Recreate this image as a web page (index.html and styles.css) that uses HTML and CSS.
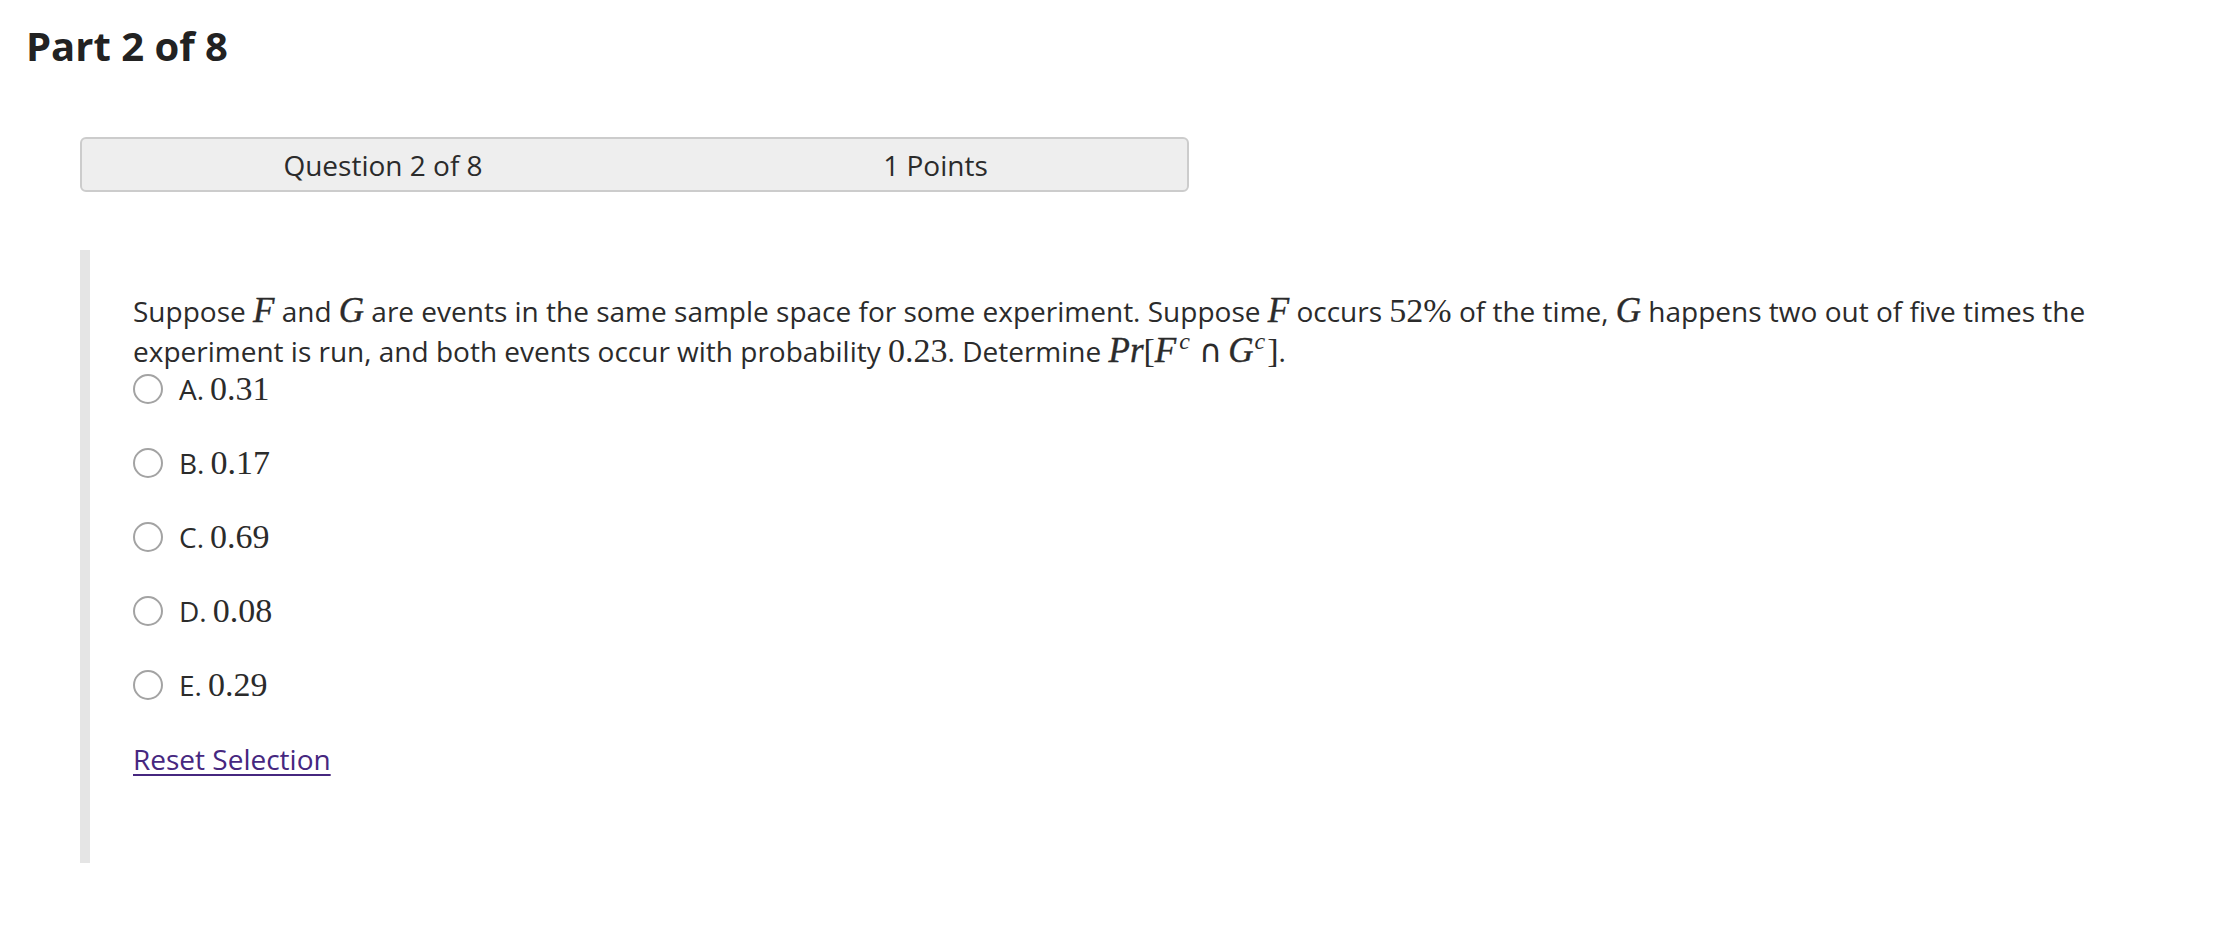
FILE: index.html
```html
<!DOCTYPE html>
<html lang="en">
<head>
<meta charset="utf-8">
<title>Part 2 of 8</title>
<link rel="stylesheet" href="styles.css">
</head>
<body>
<h1 class="part-title">Part 2 of 8</h1>
<div class="q-header">
  <div class="q-cell q-num">Question 2 of 8</div>
  <div class="q-cell q-pts">1 Points</div>
</div>
<div class="q-body">
  <p class="q-text">Suppose <span class="mi">F</span> and <span class="mi">G</span> are events in the same sample space for some experiment. Suppose <span class="mi">F</span> occurs <span class="mn">52%</span> of the time, <span class="mi">G</span> happens two out of five times the experiment is run, and both events occur with probability <span class="mn">0.23</span>. Determine <span class="mi">Pr</span><span class="mn">[</span><span class="mi">F</span><sup class="sup">c</sup><span class="cap">∩</span><span class="mi">G</span><sup class="sup sup-g">c</sup><span class="mn">]</span>.</p>
  <ul class="options">
    <li class="option"><span class="radio"></span><span class="opt-label">A.</span><span class="mn">0.31</span></li>
    <li class="option"><span class="radio"></span><span class="opt-label">B.</span><span class="mn">0.17</span></li>
    <li class="option"><span class="radio"></span><span class="opt-label">C.</span><span class="mn">0.69</span></li>
    <li class="option"><span class="radio"></span><span class="opt-label">D.</span><span class="mn">0.08</span></li>
    <li class="option"><span class="radio"></span><span class="opt-label">E.</span><span class="mn">0.29</span></li>
  </ul>
  <a class="reset" href="#">Reset Selection</a>
</div>
</body>
</html>
```
FILE: styles.css
```css
html, body {
  margin: 0;
  padding: 0;
  background: #ffffff;
}
body {
  font-family: "Open Sans", "Noto Sans", sans-serif;
  color: #2b2b2b;
  width: 2236px;
}
.part-title {
  margin: 0;
  padding: 19px 0 0 26px;
  font-size: 40px;
  font-weight: 700;
  line-height: 54px;
  color: #222222;
}
.q-header {
  box-sizing: border-box;
  margin: 64px 0 0 80px;
  width: 1109px;
  height: 55px;
  background: #eeeeee;
  border: 2px solid #cccccc;
  border-radius: 6px;
  display: grid;
  grid-template-columns: 602px 1fr;
  align-items: center;
  font-size: 28px;
  color: #2b2b2b;
}
.q-cell {
  text-align: center;
}
.q-body {
  margin: 58px 0 0 80px;
  border-left: 10px solid #e5e5e5;
  padding: 41px 60px 84px 43px;
  width: 2030px;
}
.q-text {
  margin: 0;
  font-size: 28px;
  line-height: 40px;
}
.mi {
  font-family: "Liberation Serif", "DejaVu Serif", serif;
  font-style: italic;
  font-size: 35px;
  line-height: 1;
  -webkit-text-stroke: 0.4px #2b2b2b;
}
.mn {
  font-family: "Liberation Serif", "DejaVu Serif", serif;
  font-size: 34px;
  line-height: 1;
}
.sup {
  font-family: "Liberation Serif", "DejaVu Serif", serif;
  font-style: italic;
  font-size: 24px;
  line-height: 0;
  vertical-align: 13px;
  margin: 0 9px 0 3px;
}
.sup-g {
  margin: 0 2px 0 1px;
}
.cap {
  font-family: "DejaVu Sans", sans-serif;
  font-size: 32px;
  line-height: 1;
  margin-right: 6px;
}
.options {
  list-style: none;
  margin: -2px 0 0 0;
  padding: 0;
  display: flex;
  flex-direction: column;
  gap: 34px;
}
.option {
  display: flex;
  align-items: center;
  height: 40px;
  font-size: 28px;
}
.radio {
  box-sizing: border-box;
  width: 30px;
  height: 30px;
  border: 2px solid #a3a3a3;
  border-radius: 50%;
  background: #ffffff;
  margin-right: 16px;
}
.opt-label {
  margin-right: 6px;
}
.reset {
  display: inline-block;
  margin-top: 34px;
  font-size: 28px;
  line-height: 40px;
  color: #46277f;
  text-decoration: underline;
  text-underline-offset: 4px;
  text-decoration-thickness: 2px;
}
```
